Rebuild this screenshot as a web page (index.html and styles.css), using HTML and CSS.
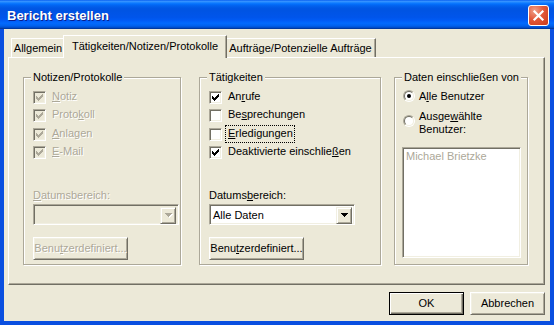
FILE: index.html
```html
<!DOCTYPE html>
<html lang="de">
<head>
<meta charset="utf-8">
<title>Bericht erstellen</title>
<link rel="stylesheet" href="styles.css">
</head>
<body>
<div class="window">
  <div class="titlebar">
    <span class="title">Bericht erstellen</span>
    <div class="close">
      <svg width="19" height="19" viewBox="0 0 19 19"><path d="M5.5 5.5L13.5 13.5M13.5 5.5L5.5 13.5" stroke="#fff" stroke-width="2.2" stroke-linecap="square"/></svg>
    </div>
  </div>
  <div class="frame">
    <div class="tabs">
      <div class="tab t1">Allgemein</div>
      <div class="tab sel t2">Tätigkeiten/Notizen/Protokolle</div>
      <div class="tab t3">Aufträge/Potenzielle Aufträge</div>
    </div>
    <div class="panel">
      <div class="group g1">
        <span class="legend">Notizen/Protokolle</span>
        <div class="checks">
          <div class="check disabled"><span class="cb"><svg class="tick" width="7" height="7" viewBox="0 0 7 7"><path d="M0 2h1v3H0zM1 3h1v3H1zM2 4h1v3H2zM3 3h1v3H3zM4 2h1v3H4zM5 1h1v3H5zM6 0h1v3H6z"/></svg></span><span class="lbl"><u>N</u>otiz</span></div>
          <div class="check disabled"><span class="cb"><svg class="tick" width="7" height="7" viewBox="0 0 7 7"><path d="M0 2h1v3H0zM1 3h1v3H1zM2 4h1v3H2zM3 3h1v3H3zM4 2h1v3H4zM5 1h1v3H5zM6 0h1v3H6z"/></svg></span><span class="lbl">Proto<u>k</u>oll</span></div>
          <div class="check disabled"><span class="cb"><svg class="tick" width="7" height="7" viewBox="0 0 7 7"><path d="M0 2h1v3H0zM1 3h1v3H1zM2 4h1v3H2zM3 3h1v3H3zM4 2h1v3H4zM5 1h1v3H5zM6 0h1v3H6z"/></svg></span><span class="lbl"><u>A</u>nlagen</span></div>
          <div class="check disabled"><span class="cb"><svg class="tick" width="7" height="7" viewBox="0 0 7 7"><path d="M0 2h1v3H0zM1 3h1v3H1zM2 4h1v3H2zM3 3h1v3H3zM4 2h1v3H4zM5 1h1v3H5zM6 0h1v3H6z"/></svg></span><span class="lbl"><u>E</u>-Mail</span></div>
        </div>
        <div class="date-label disabled-text"><u>D</u>atumsbereich:</div>
        <div class="select disabled">
          <span class="sel-text"></span>
          <span class="drop"><svg width="7" height="4" viewBox="0 0 7 4"><path d="M0 0h7v1H0zM1 1h5v1H1zM2 2h3v1H2zM3 3h1v1H3z"/></svg></span>
        </div>
        <div class="btn custom disabled-text">Benu<u>t</u>zerdefiniert...</div>
      </div>

      <div class="group g2">
        <span class="legend">Tätigkeiten</span>
        <div class="checks">
          <div class="check"><span class="cb"><svg class="tick" width="7" height="7" viewBox="0 0 7 7"><path d="M0 2h1v3H0zM1 3h1v3H1zM2 4h1v3H2zM3 3h1v3H3zM4 2h1v3H4zM5 1h1v3H5zM6 0h1v3H6z"/></svg></span><span class="lbl">An<u>r</u>ufe</span></div>
          <div class="check"><span class="cb"></span><span class="lbl">Be<u>s</u>prechungen</span></div>
          <div class="check"><span class="cb"></span><span class="lbl focus"><u>E</u>rledigungen</span></div>
          <div class="check"><span class="cb"><svg class="tick" width="7" height="7" viewBox="0 0 7 7"><path d="M0 2h1v3H0zM1 3h1v3H1zM2 4h1v3H2zM3 3h1v3H3zM4 2h1v3H4zM5 1h1v3H5zM6 0h1v3H6z"/></svg></span><span class="lbl">Deaktivierte einschlie<u>ß</u>en</span></div>
        </div>
        <div class="date-label">Datums<u>b</u>ereich:</div>
        <div class="select">
          <span class="sel-text">Alle Daten</span>
          <span class="drop"><svg width="7" height="4" viewBox="0 0 7 4"><path d="M0 0h7v1H0zM1 1h5v1H1zM2 2h3v1H2zM3 3h1v1H3z"/></svg></span>
        </div>
        <div class="btn custom">Benu<u>t</u>zerdefiniert...</div>
      </div>

      <div class="group g3">
        <span class="legend">Daten einschließen von</span>
        <div class="radio-row r1">
          <span class="radio"><span class="radio-in"><span class="dot"></span></span></span>
          <span class="rlbl">A<u>l</u>le Benutzer</span>
        </div>
        <div class="radio-row r2">
          <span class="radio"><span class="radio-in"></span></span>
          <span class="rlbl">Ausge<u>w</u>ählte<br>Benutzer:</span>
        </div>
        <div class="listbox">Michael Brietzke</div>
      </div>
    </div>
    <div class="footer">
      <div class="btn action default">OK</div>
      <div class="btn action">Abbrechen</div>
    </div>
  </div>
</div>
</body>
</html>
```
FILE: styles.css
```css
* { box-sizing: border-box; }
html, body { margin: 0; padding: 0; }
body {
  width: 554px;
  height: 325px;
  overflow: hidden;
  font-family: "Liberation Sans", Arial, sans-serif;
  font-size: 11px;
  line-height: 13px;
  color: #000;
  background: #ECE9D8;
}
u { text-decoration: underline; text-underline-offset: 1px; }

.window {
  width: 554px;
  height: 325px;
  display: flex;
  flex-direction: column;
}

/* Title bar */
.titlebar {
  flex: none;
  height: 29px;
  display: flex;
  justify-content: space-between;
  align-items: flex-start;
  padding: 0 5px 0 7px;
  background: linear-gradient(to bottom,
    #0058EE 0%, #3A93FF 4%, #288EFF 7%, #127DFF 10%, #036FFC 14%,
    #0262EE 20%, #0057E5 28%, #0054E3 36%, #0055EB 60%, #005BF5 70%,
    #026AFE 80%, #0062EF 88%, #0052D6 94%, #0040AB 97%, #003092 100%);
}
.title {
  color: #fff;
  font-weight: bold;
  font-size: 13px;
  line-height: 16px;
  padding-top: 8px;
  text-shadow: 1px 1px #0A1E8C;
}
.close {
  margin-top: 5px;
  width: 21px;
  height: 21px;
  border: 1px solid #fff;
  border-radius: 3px;
  background: radial-gradient(circle at 30% 25%, #F0A08A 0%, #E2593A 45%, #CC3A18 100%);
  display: flex;
  align-items: center;
  justify-content: center;
}
.close svg { display: block; }

/* Frame & client */
.frame {
  flex: 1;
  display: flex;
  flex-direction: column;
  border-style: solid;
  border-color: #0A4FE0;
  border-width: 0 4px 4px 4px;
  background: #ECE9D8;
  padding: 6px 5px 0 4px;
}

/* Tabs */
.tabs {
  display: flex;
  align-items: flex-end;
  height: 22px;
  margin-left: 3px;
}
.tab {
  height: 19px;
  border-top: 1px solid #fff;
  border-left: 1px solid #fff;
  border-right: 1px solid #716F64;
  box-shadow: inset -1px 0 #ACA899;
  text-align: center;
  padding-top: 3px;
  white-space: nowrap;
  background: #ECE9D8;
}
.t1 { width: 54px; }
.t2 { width: 164px; }
.t3 { width: 151px; }
.tab.sel {
  height: 23px;
  margin: 0 -2px -1px -2px;
  position: relative;
  z-index: 1;
  padding-top: 4px;
}

/* Panel */
.panel {
  height: 228px;
  border: 1px solid;
  border-color: #fff #716F64 #716F64 #fff;
  box-shadow: inset -1px -1px #ACA899;
  display: flex;
  align-items: flex-start;
  padding: 19px 0 0 14px;
}

/* Group boxes */
.group {
  position: relative;
  height: 188px;
  border: 1px solid #ACA899;
  box-shadow: inset 1px 1px #fff, 1px 1px #fff;
  padding: 13px 0 0 9px;
  display: flex;
  flex-direction: column;
  align-items: flex-start;
}
.g1 { width: 158px; }
.g2 { width: 182px; margin-left: 18px; }
.g3 { width: 134px; margin-left: 13px; padding: 12px 0 0 8px; }
.legend {
  position: absolute;
  top: -7px;
  left: 7px;
  padding: 0 2px;
  background: #ECE9D8;
  white-space: nowrap;
}

/* Checkboxes */
.checks { display: flex; flex-direction: column; }
.check {
  display: flex;
  align-items: flex-start;
  height: 18.4px;
}
.cb {
  flex: none;
  width: 13px;
  height: 13px;
  border: 1px solid;
  border-color: #ACA899 #fff #fff #ACA899;
  box-shadow: inset 1px 1px #716F64, inset -1px -1px #F1EFE2;
  background: #fff;
  padding: 2px 0 0 2px;
}
.tick { display: block; fill: #000; }
.lbl { margin-left: 6px; margin-top: -1px; white-space: nowrap; }
.check.disabled .cb { background: #ECE9D8; }
.check.disabled .tick { fill: #ACA899; }
.check.disabled .lbl,
.disabled-text { color: #ACA899; text-shadow: 1px 1px #fff; }
.focus {
  outline: 1px dotted #000;
  padding: 1px 1px 2px 2px;
  margin: -2px 0 0 4px;
}

.date-label { margin-top: 24px; white-space: nowrap; }

/* Combo box */
.select {
  margin-top: 2px;
  width: 146px;
  height: 21px;
  border: 1px solid;
  border-color: #ACA899 #fff #fff #ACA899;
  box-shadow: inset 1px 1px #716F64, inset -1px -1px #F1EFE2;
  background: #fff;
  display: flex;
  padding: 2px 2px 2px 2px;
}
.select.disabled { background: #ECE9D8; }
.sel-text { flex: 1; line-height: 17px; padding-left: 1px; }
.drop {
  width: 16px;
  height: 17px;
  background: #ECE9D8;
  border: 1px solid;
  border-color: #F1EFE2 #716F64 #716F64 #F1EFE2;
  box-shadow: inset 1px 1px #fff, inset -1px -1px #ACA899;
  display: flex;
  align-items: center;
  justify-content: center;
}
.drop svg { display: block; fill: #000; }
.select.disabled .drop svg { fill: #ACA899; filter: drop-shadow(1px 1px 0 #fff); }

/* Buttons */
.btn {
  height: 23px;
  border: 1px solid;
  border-color: #fff #716F64 #716F64 #fff;
  box-shadow: inset 1px 1px #F1EFE2, inset -1px -1px #ACA899;
  background: #ECE9D8;
  display: flex;
  align-items: center;
  justify-content: center;
  white-space: nowrap;
}
.custom { margin-top: 12px; width: 95px; }

/* Radio buttons */
.radio-row { display: flex; align-items: flex-start; }
.r2 { margin-top: 7px; }
.r1 .radio { margin-top: 0; }
.r2 .radio { margin-top: 5px; }
.radio {
  flex: none;
  width: 12px;
  height: 12px;
  border-radius: 50%;
  border: 1px solid;
  border-color: #ACA899 #fff #fff #ACA899;
  display: flex;
}
.radio-in {
  flex: 1;
  border-radius: 50%;
  border: 1px solid;
  border-color: #716F64 #F1EFE2 #F1EFE2 #716F64;
  background: #fff;
  display: flex;
  align-items: center;
  justify-content: center;
}
.dot { width: 4px; height: 4px; border-radius: 50%; background: #000; }
.rlbl { margin-left: 4px; white-space: nowrap; }

/* List box */
.listbox {
  margin: 11px 0 0 -1px;
  width: 119px;
  height: 111px;
  border: 1px solid;
  border-color: #ACA899 #fff #fff #ACA899;
  box-shadow: inset 1px 1px #716F64, inset -1px -1px #F1EFE2;
  background: #fff;
  color: #ACA899;
  padding: 2px 3px;
  white-space: nowrap;
}

/* Footer */
.footer {
  display: flex;
  justify-content: flex-end;
  gap: 6px;
  padding-top: 7px;
}
.action { width: 75px; }
.btn.default {
  border: 1px solid #000;
  box-shadow: inset 1px 1px #fff, inset -1px -1px #716F64, inset -2px -2px #ACA899;
}
```
